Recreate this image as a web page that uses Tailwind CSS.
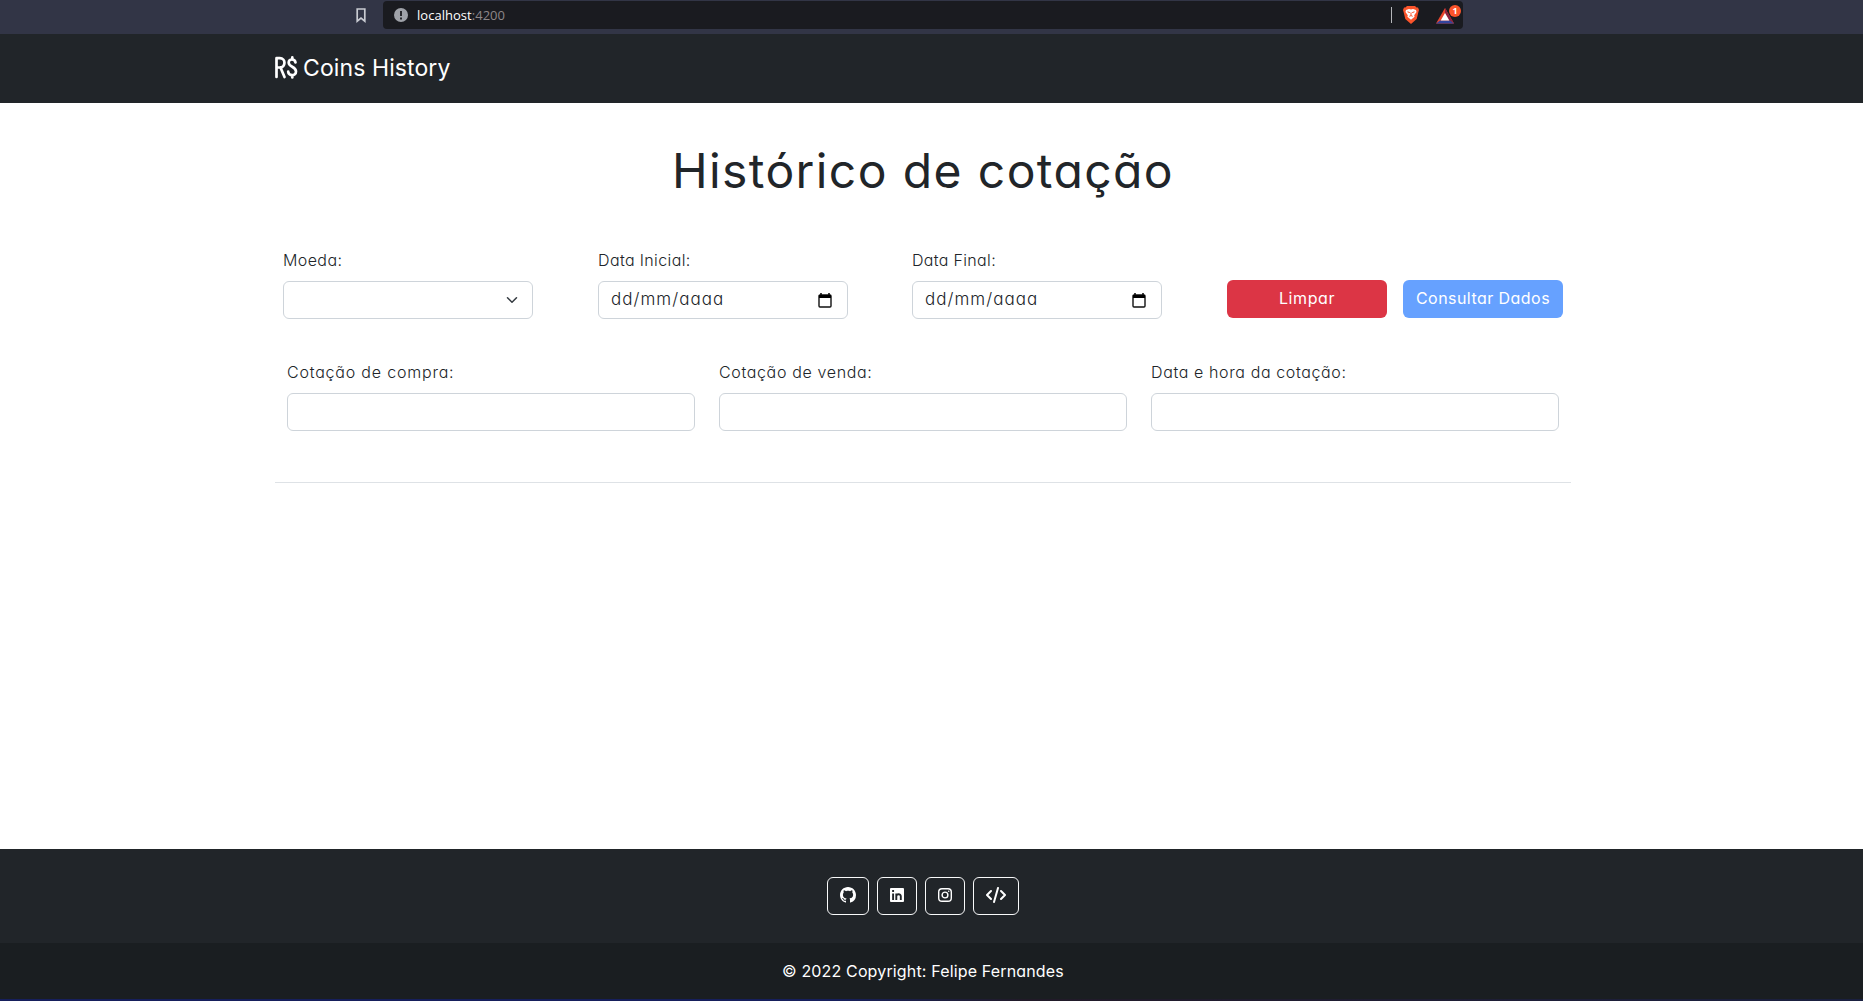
<!DOCTYPE html>
<html lang="pt-BR">
<head>
<meta charset="utf-8">
<title>Coins History</title>
<script src="https://cdn.jsdelivr.net/npm/@tailwindcss/browser@4"></script>
</head>
<body class="w-[1863px] h-[1001px] overflow-hidden flex flex-col bg-white text-[#212529] font-['Inter',sans-serif] [font-feature-settings:'cv11'] font-light text-base">
  <div class="h-[34px] shrink-0 bg-[#323546] flex items-start pt-px pl-[355px]">
    <svg class="mt-[7px] w-3 h-[15px]" viewBox="0 0 12 15" fill="none" stroke="#c9cbd2" stroke-width="1.7"><path d="M2.2 1h7.6v12.2L6 10.2l-3.800 3z"/></svg>
    <div class="ml-4 h-7 w-[1080px] rounded bg-[#1a1b20] flex items-center font-['Open_Sans',sans-serif] text-[14px] font-normal text-white">
      <svg class="ml-[11px] size-[14px]" viewBox="0 0 14 14"><circle cx="7" cy="7" r="7" fill="#9fa2a9"/><path d="M7 3v5M7 9.600v1.800" stroke="#1a1b20" stroke-width="1.800"/></svg>
      <div class="ml-[9px] w-[974px] shrink-0 text-[13px] tracking-[0.03px] leading-5"><span>localhost</span><span class="text-[#8d8789]">:4200</span></div>
      <div class="w-px h-4 bg-[#b5b6ba] shrink-0"></div>
      <svg class="ml-[11px] w-4 h-[18px] shrink-0" viewBox="0 0 16 18"><path d="M4 0h8l1.600 1.600L15 1.400 16 4l-.6 2L13.700 13 8 18 2.300 13 .6 6 0 4l1-2.600 1.400.2z" fill="#fb542b"/><path d="M3 4l3-1 2 .6 2-.6 3 1 .5 2-2.300 3.200.4 1.600L8 13.800l-3.600-3 .4-1.600L2.500 6z" fill="#fff"/><path d="M4.500 5.800l2.300.8M11.500 5.800l-2.300.8M8 6.500v3M6.300 10.300L8 9.600l1.700.7" stroke="#fb542b" fill="none"/></svg>
      <div class="relative ml-[17px] w-[26px] h-6 shrink-0">
        <svg class="absolute left-0 top-[5px] w-[18px] h-4" viewBox="0 0 18 16"><path d="M9 0L0 15.500h18z" fill="#e8452c"/><path d="M9 0l9 15.500-5-3L9 5z" fill="#8b2340"/><path d="M0 15.500l4-3h10l4 3z" fill="#34449c"/><path d="M9 5l4.300 7.500H4.700z" fill="#fff"/></svg>
        <div class="absolute left-[13px] top-[2px] size-3 rounded-full bg-[#fb542b] text-white text-[9px] leading-3 text-center font-bold">1</div>
      </div>
    </div>
  </div>
  <nav class="h-[69px] shrink-0 bg-[#212529] text-white pl-[275px] flex items-center gap-[5px]">
    <svg class="w-[23px] h-[23px] mb-[2px]" viewBox="0 0 23 23" fill="none" stroke="#fff" stroke-width="2.700" stroke-linecap="round" stroke-linejoin="round"><path d="M1.500 21V2.200h3.300c6.200 0 6.200 9.300 0 9.300H1.500M5.500 11.500L9.500 21M20.500 6.500c-.6-4-7-4-6.800.2.200 4.600 7.300 3.500 7.300 8.800 0 5-7.700 4.700-7.800.2M17.300 1.400v2M17.300 19v2.500"/></svg>
    <span class="text-[23px] leading-8 font-normal whitespace-nowrap tracking-[0.1px] mb-px">Coins History</span>
  </nav>
  <main class="h-[746px] shrink-0 w-[1296px] ml-[275px]">
    <h1 class="pt-[39px] text-center text-[48px] leading-[58px] tracking-[1.4px] font-[370]">Histórico de cotação</h1>
    <div class="pt-12 px-2 flex">
      <div class="w-[250px]"><label class="block leading-6 tracking-[0.4px]">Moeda:</label>
        <div class="mt-[9px] h-[38px] rounded-md border border-[#ced4da] flex items-center justify-end pr-3"><svg class="w-4 h-3" viewBox="0 0 16 16" fill="none" stroke="#343a40" stroke-width="2" stroke-linecap="round" stroke-linejoin="round"><path d="M2 5l6 6 6-6"/></svg></div></div>
      <div class="ml-[65px] w-[250px]"><label class="block leading-6 tracking-[0.37px]">Data Inicial:</label>
        <div class="mt-[9px] h-[38px] rounded-md border border-[#ced4da] flex items-center justify-between pl-3 pr-[15px]"><span class="text-[17px] leading-6 tracking-[1.03px] mb-[2px]">dd/mm/aaaa</span><svg class="w-[14px] h-[15px]" viewBox="0 0 14 15"><path d="M3 0v2M11 0v2" stroke="#000" stroke-width="1.500"/><rect x="1" y="2" width="12" height="12" rx="1" fill="none" stroke="#111" stroke-width="1.400"/><path d="M1 2h12v3H1z"/></svg></div></div>
      <div class="ml-[64px] w-[250px]"><label class="block leading-6 tracking-[0.33px]">Data Final:</label>
        <div class="mt-[9px] h-[38px] rounded-md border border-[#ced4da] flex items-center justify-between pl-3 pr-[15px]"><span class="text-[17px] leading-6 tracking-[1.03px] mb-[2px]">dd/mm/aaaa</span><svg class="w-[14px] h-[15px]" viewBox="0 0 14 15"><path d="M3 0v2M11 0v2" stroke="#000" stroke-width="1.500"/><rect x="1" y="2" width="12" height="12" rx="1" fill="none" stroke="#111" stroke-width="1.400"/><path d="M1 2h12v3H1z"/></svg></div></div>
      <div class="ml-[65px] mt-8 flex gap-4 text-white font-normal">
        <button class="w-40 h-[38px] pb-[2px] rounded-md bg-[#dc3545] tracking-[0.6px]">Limpar</button>
        <button class="w-40 h-[38px] pb-[2px] rounded-md bg-[#66a1ff] tracking-[0.45px] whitespace-nowrap">Consultar Dados</button>
      </div>
    </div>
    <div class="mt-[41px] px-3 grid grid-cols-3 gap-6">
      <div><label class="block leading-6 tracking-[0.8px]">Cotação de compra:</label><div class="mt-[9px] h-[38px] rounded-md border border-[#ced4da]"></div></div>
      <div><label class="block leading-6 tracking-[0.65px]">Cotação de venda:</label><div class="mt-[9px] h-[38px] rounded-md border border-[#ced4da]"></div></div>
      <div><label class="block leading-6 tracking-[0.62px]">Data e hora da cotação:</label><div class="mt-[9px] h-[38px] rounded-md border border-[#ced4da]"></div></div>
    </div>
    <div class="mt-[51px] h-px bg-[#dee2e6]"></div>
  </main>
  <footer class="h-[152px] shrink-0 bg-[#212529] text-white">
    <div class="h-[94px] pt-7 pl-[827px] flex gap-2">
      <a class="w-[42px] h-[38px] pb-[2px] rounded-md border border-[#f8f9fa] flex items-center justify-center"><svg class="size-4" viewBox="0 0 16 16" fill="#fff"><path d="M8 0C3.580 0 0 3.580 0 8c0 3.540 2.290 6.530 5.470 7.590.4.070.55-.17.55-.38 0-.19-.01-.82-.01-1.490-2.010.37-2.530-.49-2.690-.94-.09-.23-.48-.94-.82-1.130-.28-.15-.68-.52-.01-.53.63-.01 1.080.58 1.230.82.72 1.210 1.870.87 2.330.66.070-.52.28-.87.51-1.070-1.780-.2-3.640-.89-3.640-3.950 0-.87.31-1.590.82-2.150-.08-.2-.36-1.020.08-2.120 0 0 .67-.21 2.200.82.64-.18 1.320-.27 2-.27s1.360.09 2 .27c1.530-1.040 2.200-.82 2.200-.82.44 1.100.16 1.920.08 2.120.51.56.82 1.270.82 2.150 0 3.070-1.870 3.750-3.650 3.950.29.25.54.73.54 1.480 0 1.070-.01 1.930-.01 2.200 0 .21.15.46.55.38A8.010 8.010 0 0 0 16 8c0-4.420-3.580-8-8-8"/></svg></a>
      <a class="w-10 h-[38px] pb-[2px] rounded-md border border-[#f8f9fa] flex items-center justify-center"><svg class="size-[14px]" viewBox="0 0 14 14"><rect width="14" height="14" rx="1" fill="#fff"/><path d="M3.100 5.400V12M3.100 2v2M6.300 12V5.400M6.300 8.300c0-2.600 4.500-2.900 4.500 0V12" stroke="#212529" stroke-width="1.900" fill="none"/></svg></a>
      <a class="w-10 h-[38px] pb-[2px] rounded-md border border-[#f8f9fa] flex items-center justify-center"><svg class="size-[14px]" viewBox="0 0 14 14" fill="none" stroke="#fff" stroke-width="1.400"><rect x=".7" y=".7" width="12.600" height="12.600" rx="3.300"/><circle cx="7" cy="7" r="2.900"/><circle cx="10.700" cy="3.300" r=".8" fill="#fff" stroke="none"/></svg></a>
      <a class="w-[46px] h-[38px] pb-[2px] rounded-md border border-[#f8f9fa] flex items-center justify-center"><svg class="w-5 h-4" viewBox="0 0 20 16" fill="none" stroke="#fff" stroke-width="2" stroke-linecap="round" stroke-linejoin="round"><path d="M5 4L1 8l4 4M15 4l4 4-4 4M12 1L8 15"/></svg></a>
    </div>
    <div class="h-[56px] bg-[#1a1e21] flex items-center pl-[782px]"><span class="font-normal whitespace-nowrap tracking-[0.15px]">© 2022 Copyright: Felipe Fernandes</span></div>
    <div class="h-[2px] bg-linear-to-r from-[#161f5c] from-45% via-[#211a28] via-55% to-[#1a2040]"></div>
  </footer>
</body>
</html>
